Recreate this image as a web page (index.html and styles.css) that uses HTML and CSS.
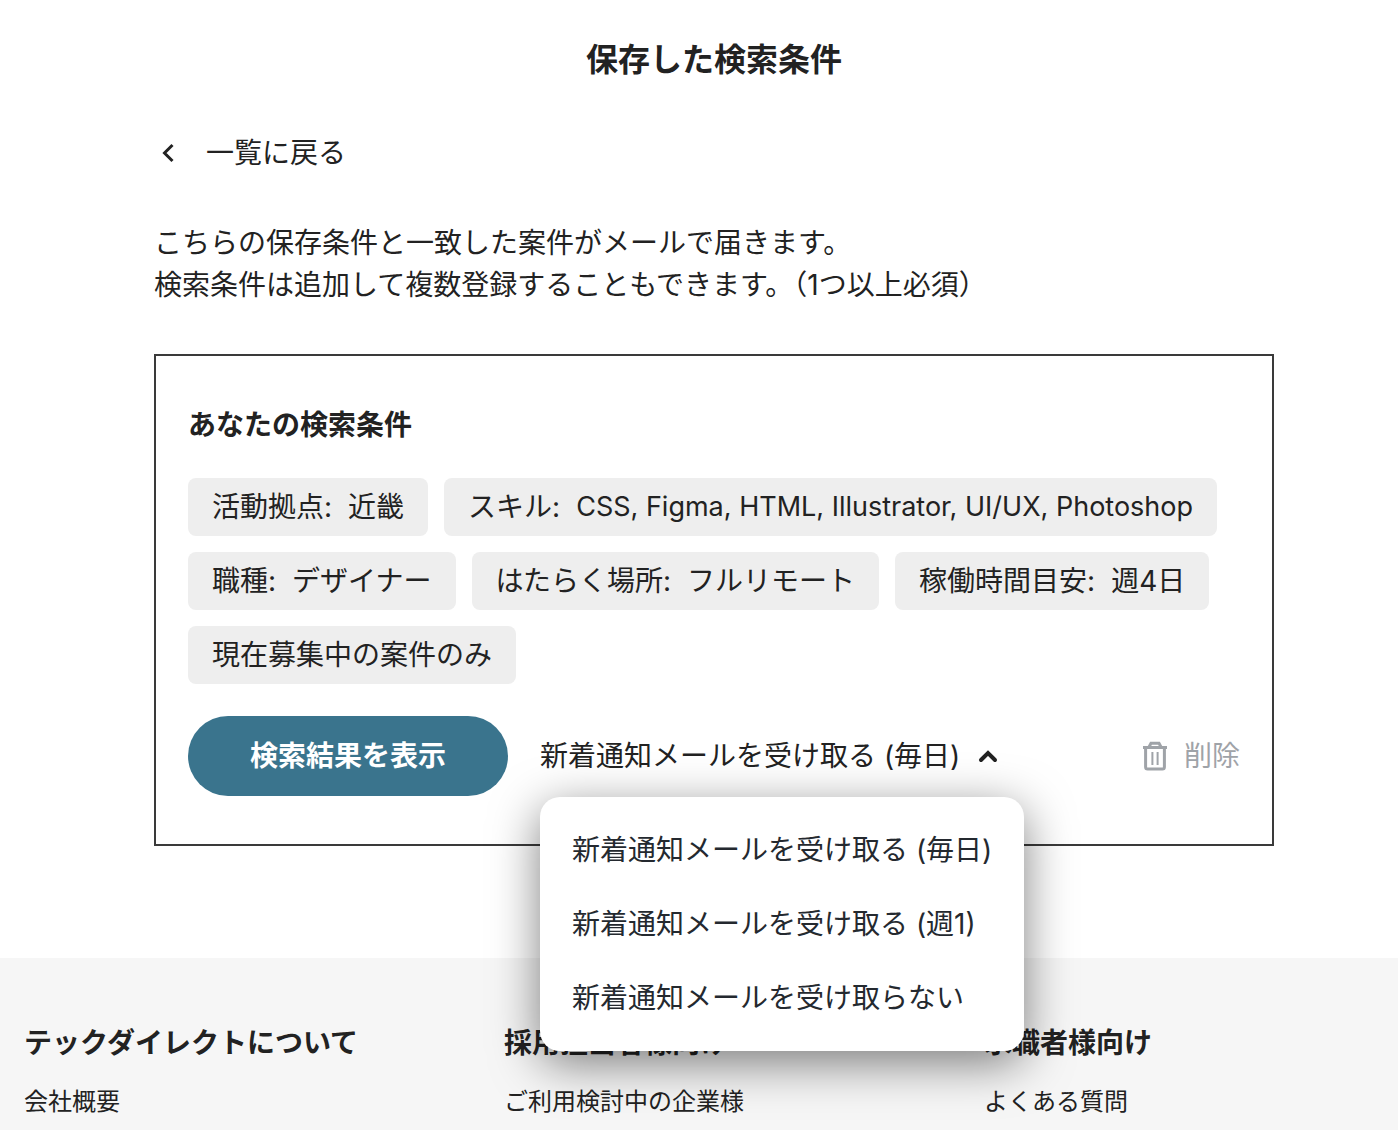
FILE: index.html
```html
<!DOCTYPE html>
<html lang="ja">
<head>
  <meta charset="UTF-8">
  <meta name="viewport" content="width=device-width, initial-scale=1">
  <title>保存した検索条件</title>
  <link rel="stylesheet" href="styles.css">
</head>
<body>

  <main class="page">
    <h1 class="page-title">保存した検索条件</h1>

    <a class="back-link" href="#">
      <svg class="back-icon" viewBox="0 0 28 28" aria-hidden="true">
        <path d="M18.500 6L10.500 14L18.500 22" />
      </svg>
      一覧に戻る
    </a>

    <p class="lead">こちらの保存条件と一致した案件がメールで届きます。<br>検索条件は追加して複数登録することもできます。（1つ以上必須）</p>

    <section class="card">
      <h2 class="card-title">あなたの検索条件</h2>

      <ul class="tags">
        <li class="tag"><span>活動拠点:</span><span>近畿</span></li>
        <li class="tag"><span>スキル:</span><span class="tag-skills">CSS, Figma, HTML, Illustrator, UI/UX, Photoshop</span></li>
        <li class="tag"><span>職種:</span><span>デザイナー</span></li>
        <li class="tag"><span>はたらく場所:</span><span>フルリモート</span></li>
        <li class="tag"><span>稼働時間目安:</span><span>週4日</span></li>
        <li class="tag"><span>現在募集中の案件のみ</span></li>
      </ul>

      <div class="actions">
        <button class="show-button" type="button">検索結果を表示</button>

        <div class="notify">
          <button class="notify-toggle" type="button" aria-haspopup="menu" aria-expanded="true" aria-controls="notify-menu">
            新着通知メールを受け取る (毎日)
            <svg class="notify-icon" viewBox="0 0 20 20" aria-hidden="true">
              <path d="M3 14L10 7L17 14" />
            </svg>
          </button>
          <div class="notify-menu" id="notify-menu" role="menu">
            <button class="notify-item" type="button" role="menuitem">新着通知メールを受け取る (毎日)</button>
            <button class="notify-item" type="button" role="menuitem">新着通知メールを受け取る (週1)</button>
            <button class="notify-item" type="button" role="menuitem">新着通知メールを受け取らない</button>
          </div>
        </div>

        <button class="delete-button" type="button">
          <svg class="delete-icon" viewBox="0 0 26 30" aria-hidden="true">
            <path d="M1 6.500H25M7 6L9 2.300H17L19 6M3.600 7V26Q3.600 28 5.600 28H20.400Q22.400 28 22.400 26V7" />
            <path class="delete-bars" d="M10.400 11V24M15.600 11V24" />
          </svg>
          削除
        </button>
      </div>
    </section>
  </main>

  <footer class="footer">
    <nav class="footer-column">
      <h3 class="footer-title">テックダイレクトについて</h3>
      <a class="footer-link" href="#">会社概要</a>
    </nav>
    <nav class="footer-column">
      <h3 class="footer-title">採用担当者様向け</h3>
      <a class="footer-link" href="#">ご利用検討中の企業様</a>
    </nav>
    <nav class="footer-column">
      <h3 class="footer-title">求職者様向け</h3>
      <a class="footer-link" href="#">よくある質問</a>
    </nav>
  </footer>

</body>
</html>
```
FILE: styles.css
```css
* {
  box-sizing: border-box;
}
body {
  margin: 0;
  background: #fff;
  color: #222;
  font-family: Inter, "Noto Sans CJK JP", sans-serif;
  font-size: 28px;
  line-height: 42px;
}
h1, h2, h3, p, ul {
  margin: 0;
  padding: 0;
}
a {
  color: inherit;
  text-decoration: none;
}
button {
  border: 0;
  padding: 0;
  background: none;
  color: inherit;
  font: inherit;
  cursor: pointer;
}
svg {
  fill: none;
  stroke: currentColor;
  flex: none;
}

.page {
  max-width: 1150px;
  margin: 0 auto;
  padding: 36px 0 112px 30px;
}
.page-title {
  font-size: 32px;
  line-height: 48px;
  text-align: center;
}
.back-link {
  display: flex;
  align-items: center;
  gap: 24px;
  width: fit-content;
  margin-top: 48px;
}
.back-icon {
  width: 28px;
  height: 28px;
  stroke-width: 3;
}
.lead {
  margin-top: 48px;
}

.card {
  margin-top: 48px;
  padding: 48px 32px;
  border: 2px solid #3a3a3a;
}
.card-title {
  font-size: 28px;
}
.tags {
  display: flex;
  flex-wrap: wrap;
  gap: 16px;
  margin-top: 32px;
  list-style: none;
}
.tag {
  display: flex;
  gap: 16px;
  padding: 8px 24px;
  border-radius: 8px;
  background: #eee;
}
.tag-skills {
  font-size: 27px;
}
.actions {
  display: flex;
  align-items: center;
  margin-top: 32px;
}
.show-button {
  width: 320px;
  height: 80px;
  border-radius: 40px;
  background: #3a748d;
  color: #fff;
  font-weight: bold;
}
.notify {
  position: relative;
  margin-left: 32px;
}
.notify-toggle {
  display: flex;
  align-items: center;
  gap: 18px;
}
.notify-icon {
  width: 20px;
  height: 20px;
  stroke-width: 4;
  stroke-linecap: round;
}
.notify-menu {
  position: absolute;
  top: 100%;
  left: 0;
  z-index: 1;
  margin-top: 20px;
  padding: 16px 0;
  border-radius: 20px;
  background: #fff;
  box-shadow: 0 12px 48px rgba(0, 0, 0, 0.5);
}
.notify-item {
  display: block;
  width: 100%;
  padding: 16px 32px;
  color: #24292f;
  text-align: left;
  white-space: nowrap;
}
.delete-button {
  display: flex;
  align-items: center;
  gap: 16px;
  margin-left: auto;
  color: #9fa3a8;
}
.delete-icon {
  width: 26px;
  height: 30px;
  stroke-width: 3;
}
.delete-bars {
  stroke-width: 2;
}

.footer {
  display: grid;
  grid-template-columns: repeat(3, 1fr);
  gap: 90px;
  padding: 64px 24px 48px;
  background: #f6f6f6;
}
.footer-title {
  font-size: 28px;
  white-space: nowrap;
}
.footer-link {
  display: block;
  margin-top: 20px;
  font-size: 24px;
  line-height: 36px;
}
```
